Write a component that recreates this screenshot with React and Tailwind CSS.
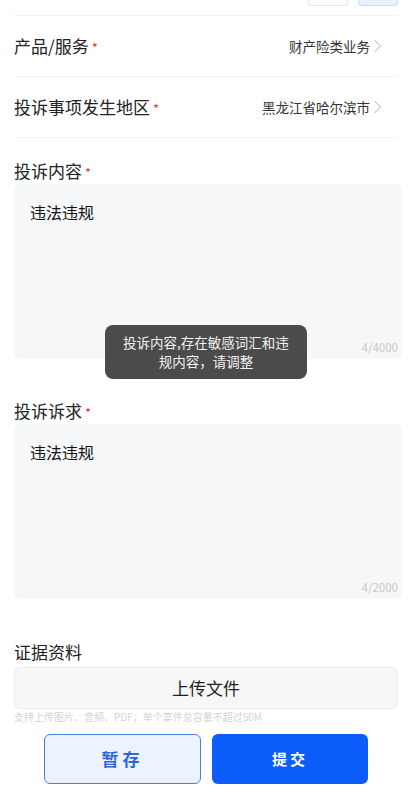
import { useState } from 'react'

const font = { fontFamily: '"Noto Sans CJK SC", "Noto Sans", sans-serif' }

function Chevron() {
  return (
    <svg width="9" height="16" viewBox="0 0 9 16" className="ml-[3px] shrink-0">
      <polyline points="1.5,2 7.5,8 1.5,14" fill="none" stroke="#d0d0d0" strokeWidth="1.2" />
    </svg>
  )
}

function Star() {
  return <span className="text-[#e23b3b] text-[13px] ml-[3px] relative top-[2px]">*</span>
}

function PickRow({ label, value }) {
  return (
    <div className="flex items-center justify-between h-[61px] border-b border-[#f2f2f2]">
      <div className="flex items-center text-[17px] text-[#222]">
        {label}
        <Star />
      </div>
      <div className="flex items-center text-[13.5px] text-[#333] pr-[16px]">
        {value}
        <Chevron />
      </div>
    </div>
  )
}

function TextBox({ label, text, max }) {
  return (
    <div>
      <div className="flex items-center h-[24px] text-[17px] text-[#222]">
        {label}
        <Star />
      </div>
      <div className="mt-[1px] mr-[-4px] h-[175px] rounded-md bg-[#f6f7f9] flex flex-col justify-between pt-[16px] pb-[6px] pl-[16px] pr-[4px]">
        <p className="text-[16px] leading-[24px] text-[#111]">{text}</p>
        <p className="text-right text-[11.5px] leading-[12px] text-[#c9c9c9]">{text.length}/{max}</p>
      </div>
    </div>
  )
}

export default function App() {
  const [showToast] = useState(true)

  return (
    <div className="relative w-[412px] h-[800px] bg-white overflow-hidden" style={font}>
      <div className="px-[14px]">
        {/* top bar remnants */}
        <div className="flex justify-end items-start h-[16px] border-b border-[#f2f2f2]">
          <div className="w-[40px] h-[6px] border-x border-b border-[#e4e4e4] rounded-b-[4px] bg-white" />
          <div className="w-[40px] h-[6px] ml-[10px] border-x border-b border-[#cfdcf0] rounded-b-[4px] bg-[#eaf2fd]" />
        </div>

        <PickRow label="产品/服务" value="财产险类业务" />
        <PickRow label="投诉事项发生地区" value="黑龙江省哈尔滨市" />

        <div className="pt-[21px]">
          <TextBox label="投诉内容" text="违法违规" max={4000} />
        </div>

        <div className="pt-[40px]">
          <TextBox label="投诉诉求" text="违法违规" max={2000} />
        </div>

        {/* evidence */}
        <div className="pt-[41px]">
          <div className="h-[24px] flex items-center text-[17px] text-[#222]">证据资料</div>
          <button className="mt-[3px] w-full h-[42px] rounded-md border border-[#ececec] bg-[#f7f7f7] text-[17px] text-[#222]">
            上传文件
          </button>
          <p className="mt-[1px] text-[10px] leading-[14px] text-[#d4d4d4]">
            支持上传图片、音频、PDF；单个案件总容量不超过50M
          </p>
        </div>

        {/* actions */}
        <div className="mt-[10px] flex justify-center gap-[11px]">
          <button className="w-[157px] h-[50px] rounded-md border-[1.5px] border-[#4a7ee6] bg-[#eaf3fe] text-[17px] font-bold tracking-[4px] text-[#2f66d6]">
            暂存
          </button>
          <button className="w-[156px] h-[50px] rounded-md bg-[#0b5cf8] text-[15px] font-bold tracking-[3px] text-white">
            提交
          </button>
        </div>
      </div>

      {showToast && (
        <div className="absolute left-[105px] top-[325px] w-[202px] h-[54px] rounded-lg bg-[#4b4b4b] flex items-center justify-center">
          <p className="text-center whitespace-nowrap text-[13.5px] leading-[19px] text-[#f2f2f2]">
            投诉内容,存在敏感词汇和违<br />规内容，请调整
          </p>
        </div>
      )}
    </div>
  )
}
